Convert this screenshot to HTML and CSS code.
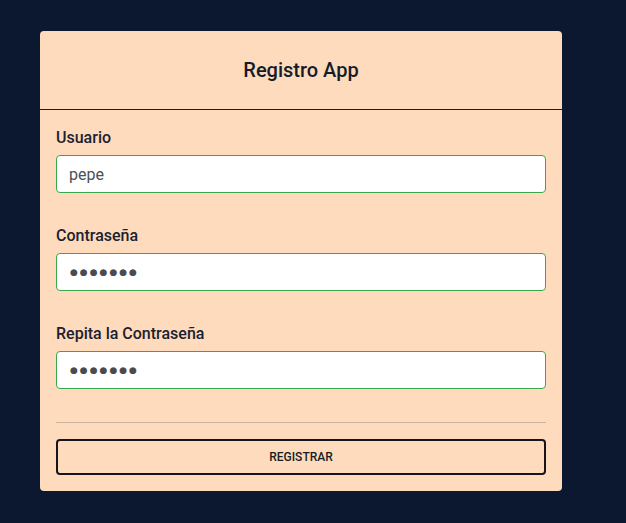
FILE: index.html
```html
<!DOCTYPE html>
<html lang="es">
<head>
<meta charset="utf-8">
<title>Registro App</title>
<link rel="stylesheet" href="styles.css">
</head>
<body>
<main class="page">
  <section class="card">
    <header class="card-header">
      <h1 class="card-title">Registro App</h1>
    </header>
    <form class="card-body">
      <div class="field">
        <label class="field-label" for="usuario">Usuario</label>
        <input class="field-input" id="usuario" type="text" value="pepe">
      </div>
      <div class="field">
        <label class="field-label" for="pass">Contraseña</label>
        <input class="field-input field-secret" id="pass" type="text" value="●●●●●●●" readonly>
      </div>
      <div class="field">
        <label class="field-label" for="pass2">Repita la Contraseña</label>
        <input class="field-input field-secret" id="pass2" type="text" value="●●●●●●●" readonly>
      </div>
      <hr class="divider">
      <button class="btn" type="button">REGISTRAR</button>
    </form>
  </section>
</main>
</body>
</html>
```

FILE: styles.css
```css
* { box-sizing: border-box; }
html, body {
  margin: 0;
  padding: 0;
  background: #0b1830;
  height: 100%;
}
body {
  font-family: Roboto, "Liberation Sans", sans-serif;
  color: #1b2130;
}
.page {
  padding: 31px 0 0 40px;
}
.card {
  width: 522px;
  background: #fedbbc;
  border-radius: 4px;
}
.card-header {
  height: 79px;
  border-bottom: 1px solid #1d1d22;
  display: flex;
  align-items: center;
  justify-content: center;
}
.card-title {
  margin: 0;
  font-size: 20px;
  font-weight: 500;
  line-height: 24px;
  color: #151b2a;
}
.card-body {
  padding: 16px 16px 16px;
  display: flex;
  flex-direction: column;
}
.field {
  display: flex;
  flex-direction: column;
  margin-bottom: 31px;
}
.field:nth-of-type(3) {
  margin-bottom: 33px;
}
.field-label {
  font-size: 16px;
  font-weight: 500;
  line-height: 24px;
  margin-bottom: 5px;
  color: #1b2130;
}
.field-input {
  height: 38px;
  border: 1px solid #3aa84a;
  border-radius: 4px;
  background: #fff;
  padding: 6px 12px;
  font-family: Roboto, "Liberation Sans", sans-serif;
  font-size: 16px;
  color: #4b4f56;
  outline: none;
}
.field-secret {
  font-family: "DejaVu Sans", sans-serif;
  font-size: 9px;
  letter-spacing: 2px;
  padding-left: 13px;
  color: #4a4a50;
}
.divider {
  margin: 0 0 16px;
  border: 0;
  border-top: 1px solid #c9b29e;
  height: 0;
}
.btn {
  height: 36px;
  border: 2px solid #17151a;
  border-radius: 4px;
  background: transparent;
  font-family: Roboto, "Liberation Sans", sans-serif;
  font-size: 12px;
  font-weight: 500;
  color: #1b1b22;
  cursor: pointer;
}
```
